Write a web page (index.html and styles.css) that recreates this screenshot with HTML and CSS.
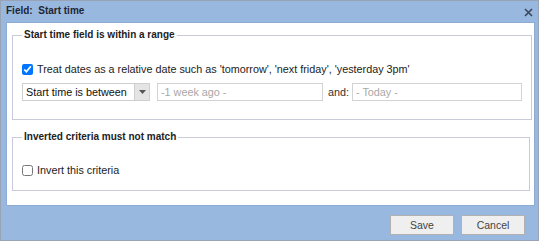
FILE: index.html
```html
<!DOCTYPE html>
<html>
<head>
<meta charset="utf-8">
<link rel="stylesheet" href="styles.css">
</head>
<body>
<div class="dialog">
  <div class="titlebar">
    <span class="title">Field:&nbsp; Start time</span>
    <svg class="close" width="9" height="9" viewBox="0 0 9 9"><path d="M1 1 L8 8 M8 1 L1 8" stroke="#3b4658" stroke-width="1.6" fill="none"/></svg>
  </div>
  <div class="panel">
    <fieldset class="group group-range">
      <legend>Start time field is within a range</legend>
      <label class="check-row">
        <input type="checkbox" checked>
        <span>Treat dates as a relative date such as 'tomorrow', 'next friday', 'yesterday 3pm'</span>
      </label>
      <div class="range-row">
        <div class="select">
          <span class="select-text">Start time is between</span>
          <span class="select-arrow"><svg width="7" height="4" viewBox="0 0 7 4"><path d="M0 0 H7 L3.5 4 Z" fill="#555"/></svg></span>
        </div>
        <input class="text-input from" type="text" placeholder="-1 week ago -">
        <span class="and">and:</span>
        <input class="text-input to" type="text" placeholder="- Today -">
      </div>
    </fieldset>
    <fieldset class="group group-invert">
      <legend>Inverted criteria must not match</legend>
      <label class="check-row">
        <input type="checkbox">
        <span>Invert this criteria</span>
      </label>
    </fieldset>
  </div>
  <div class="buttons">
    <button class="btn">Save</button>
    <button class="btn">Cancel</button>
  </div>
</div>
</body>
</html>
```
FILE: styles.css
```css
html, body {
  margin: 0;
  padding: 0;
}
body {
  width: 539px;
  height: 241px;
  overflow: hidden;
  font-family: "Liberation Sans", Arial, sans-serif;
  font-size: 10.8px;
  color: #222;
}
.dialog {
  box-sizing: border-box;
  width: 539px;
  height: 241px;
  background: #99b8e0;
  border: 1px solid #98a4b6;
  display: flex;
  flex-direction: column;
}
.titlebar {
  height: 21px;
  display: flex;
  align-items: center;
  justify-content: space-between;
  padding: 0 5px 0 5px;
  box-sizing: border-box;
}
.title {
  font-weight: bold;
  font-size: 10px;
  color: #1e2633;
  margin-top: -3px;
}
.close {
  margin-top: 2px;
}
.panel {
  margin: 0 3px 0 5px;
  background: #fff;
  border: 1px solid #8eabd6;
  height: 184px;
  box-sizing: border-box;
  padding: 6px 4px 0 5px;
}
.group {
  margin: 0;
  border: 1px solid #c9ccd8;
  padding: 0 9px;
}
.group legend {
  font-weight: bold;
  font-size: 10px;
  line-height: 12px;
  padding: 0 2px;
  color: #222;
}
.group-range {
  padding-top: 21px;
  padding-bottom: 18px;
}
.group-invert {
  margin-top: 11px;
  padding-top: 20px;
  padding-bottom: 13px;
}
.check-row {
  display: flex;
  align-items: center;
  height: 14px;
  gap: 4px;
}
.check-row input {
  width: 11px;
  height: 11px;
  margin: 0;
}
.range-row {
  display: flex;
  align-items: center;
  margin-top: 7px;
  height: 18px;
}
.select {
  display: flex;
  width: 128px;
  height: 18px;
  box-sizing: border-box;
  border: 1px solid #cfcfcf;
}
.select-text {
  flex: 1;
  padding-left: 3px;
  line-height: 16px;
  color: #111;
}
.select-arrow {
  width: 14px;
  background: #e4e4e4;
  border-left: 1px solid #cfcfcf;
  display: flex;
  align-items: center;
  justify-content: center;
}
.text-input {
  box-sizing: border-box;
  height: 18px;
  border: 1px solid #d3d3d3;
  padding: 0 3px;
  font-family: "Liberation Sans", Arial, sans-serif;
  font-size: 10.8px;
  outline: none;
}
.text-input::placeholder {
  color: #a8a8a8;
}
.from {
  width: 166px;
  margin-left: 7px;
}
.and {
  margin-left: 5px;
  width: 24px;
  color: #333;
}
.to {
  width: 170px;
}
.buttons {
  display: flex;
  justify-content: flex-end;
  gap: 7px;
  padding: 9px 13px 0 0;
}
.btn {
  width: 64px;
  height: 20px;
  background: #efefef;
  border: 1px solid #b1b1b1;
  border-radius: 0;
  font-family: "Liberation Sans", Arial, sans-serif;
  font-size: 10.5px;
  color: #444;
  padding: 0;
}
```
